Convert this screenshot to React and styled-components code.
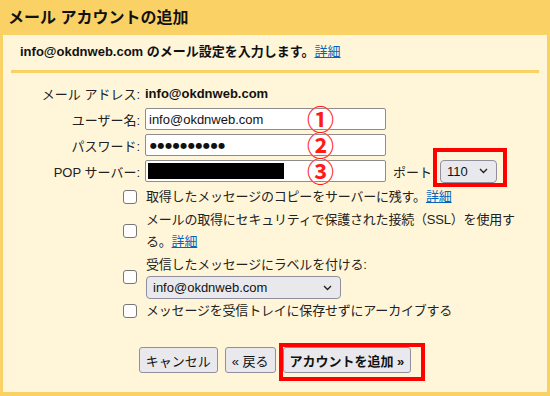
import React from "react";
import styled, { createGlobalStyle } from "styled-components";

const GlobalStyle = createGlobalStyle`
    html, body {
        margin: 0;
        padding: 0;
        background: #fad165;
    }
    body {
        font-family: "Liberation Sans", "Noto Sans CJK JP", sans-serif;
        font-size: 13px;
        color: #222;
    }
`

const Page = styled.div`
    width: 550px;
    height: 396px;
    display: flex;
    flex-direction: column;
    background: #fad165;
`
const Title = styled.h1`
    margin: 0;
    height: 35px;
    line-height: 35px;
    padding-left: 8px;
    font-size: 16px;
    font-weight: bold;
    color: #111;
`
const Panel = styled.div`
    flex: 1;
    margin: 0 3px 4px 3px;
    background: #fff6d9;
    display: flex;
    flex-direction: column;
`
const Intro = styled.div`
    padding: 8px 0 0 17px;
    line-height: 18px;
    font-weight: bold;
    color: #111;
`
const Link = styled.a`
    color: #0563c1;
    text-decoration: underline;
    font-weight: normal;
    cursor: pointer;
`
const Separator = styled.div`
    height: 3px;
    margin: 9px 8px 0 8px;
    background: #fad165;
`
const FieldGrid = styled.div`
    display: grid;
    grid-template-columns: 137px 1fr;
    column-gap: 5px;
    row-gap: 4px;
    grid-auto-rows: 22px;
    padding-top: 9px;
    align-items: center;
`
const Label = styled.div`
    text-align: right;
    white-space: nowrap;
    color: #222;
`
const Value = styled.div`
    font-weight: bold;
    color: #111;
`
const FieldLine = styled.div`
    display: flex;
    align-items: center;
`
const InputWrap = styled.div`
    position: relative;
    width: 241px;
    height: 22px;
`
const TextInput = styled.input`
    box-sizing: border-box;
    width: 100%;
    height: 100%;
    margin: 0;
    padding: 0 3px;
    border: 1px solid #8d8d8d;
    border-radius: 2px;
    background: #fff;
    font-family: "Liberation Sans", "Noto Sans CJK JP", sans-serif;
    font-size: 13px;
    color: #111;
    outline: none;
`
const DotsInput = styled(TextInput)`
    font-family: "DejaVu Sans", sans-serif;
    font-size: 8px;
    letter-spacing: 0.6px;
    padding-left: 4px;
`
const FakeInput = styled.div`
    box-sizing: border-box;
    width: 100%;
    height: 100%;
    padding: 2px 2px;
    border: 1px solid #8d8d8d;
    border-radius: 2px;
    background: #fff;
`
const Redacted = styled.div`
    width: 136px;
    height: 100%;
    background: #000;
`
const Mark = styled.span`
    position: absolute;
    left: 162px;
    top: 50%;
    transform: translateY(-50%);
    font-family: "Noto Sans CJK JP", sans-serif;
    font-size: 27px;
    font-weight: bold;
    line-height: 20px;
    color: #ff1a1a;
    text-shadow: 0 0 1px #fff;
    pointer-events: none;
`
const PortLabel = styled.span`
    margin-left: 7px;
    margin-right: 8px;
`
const Highlight = styled.div`
    position: relative;
    display: inline-flex;
`
const RedBox = styled.div`
    position: absolute;
    top: ${p => p.$t}px;
    left: ${p => p.$l}px;
    right: ${p => p.$r}px;
    bottom: ${p => p.$b}px;
    border: ${p => p.$w || 4}px solid #ff0000;
    pointer-events: none;
`
const Select = styled.div`
    box-sizing: border-box;
    width: ${p => p.$w}px;
    height: 23px;
    display: flex;
    align-items: center;
    justify-content: space-between;
    padding: 0 8px 0 6px;
    background: #e9e9ed;
    border: 1px solid #8f8f9d;
    border-radius: 4px;
    color: #111;
    font-size: 13px;
`
const Options = styled.div`
    display: grid;
    grid-template-columns: 137px 1fr;
    column-gap: 6px;
    row-gap: 1px;
    margin-top: 4px;
`
const Box = styled.span`
    justify-self: end;
    align-self: center;
    box-sizing: border-box;
    width: 14px;
    height: 14px;
    margin-right: 3px;
    border: 1px solid #767676;
    border-radius: 3px;
    background: #fff;
`
const OptionText = styled.div`
    line-height: 22px;
    color: #222;
    letter-spacing: -0.2px;
`
const Buttons = styled.div`
    display: flex;
    justify-content: center;
    gap: 7px;
    margin-top: 25px;
`
const Button = styled.button`
    box-sizing: border-box;
    height: 26px;
    padding: 0 6px;
    background: #e9e9ed;
    border: 1px solid #8f8f9d;
    border-radius: 3px;
    font-family: "Liberation Sans", "Noto Sans CJK JP", sans-serif;
    font-size: 13px;
    font-weight: ${p => (p.$primary ? "bold" : "normal")};
    color: #111;
`

const Chevron = () => (
    <svg width="9" height="6" viewBox="0 0 9 6">
        <path d="M1 1 L4.5 4.5 L8 1" fill="none" stroke="#222" strokeWidth="1.4" />
    </svg>
)

export default function App() {
    return (
        <Page>
            <GlobalStyle />
            <Title>メール アカウントの追加</Title>
            <Panel>
                <Intro>
                    info@okdnweb.com のメール設定を入力します。<Link>詳細</Link>
                </Intro>
                <Separator />

                <FieldGrid>
                    <Label>メール アドレス:</Label>
                    <Value>info@okdnweb.com</Value>

                    <Label>ユーザー名:</Label>
                    <InputWrap>
                        <TextInput type="text" defaultValue="info@okdnweb.com" />
                        <Mark>①</Mark>
                    </InputWrap>

                    <Label>パスワード:</Label>
                    <InputWrap>
                        <DotsInput type="text" defaultValue="●●●●●●●●●●" />
                        <Mark>②</Mark>
                    </InputWrap>

                    <Label>POP サーバー:</Label>
                    <FieldLine>
                        <InputWrap>
                            <FakeInput><Redacted /></FakeInput>
                            <Mark>③</Mark>
                        </InputWrap>
                        <PortLabel>ポート</PortLabel>
                        <Highlight>
                            <Select $w={57}>110<Chevron /></Select>
                            <RedBox $t={-12} $l={-7} $r={-10} $b={-4} />
                        </Highlight>
                    </FieldLine>
                </FieldGrid>

                <Options>
                    <Box />
                    <OptionText>取得したメッセージのコピーをサーバーに残す。<Link>詳細</Link></OptionText>

                    <Box />
                    <OptionText>
                        メールの取得にセキュリティで保護された接続（SSL）を使用す<br />る。<Link>詳細</Link>
                    </OptionText>

                    <Box />
                    <div>
                        <OptionText>受信したメッセージにラベルを付ける:</OptionText>
                        <Select $w={195}>info@okdnweb.com<Chevron /></Select>
                    </div>

                    <Box />
                    <OptionText>メッセージを受信トレイに保存せずにアーカイブする</OptionText>
                </Options>

                <Buttons>
                    <Button>キャンセル</Button>
                    <Button>« 戻る</Button>
                    <Highlight>
                        <Button $primary>アカウントを追加 »</Button>
                        <RedBox $t={-4} $l={-4} $r={-14} $b={-8} $w={4} />
                    </Highlight>
                </Buttons>
            </Panel>
        </Page>
    )
}
